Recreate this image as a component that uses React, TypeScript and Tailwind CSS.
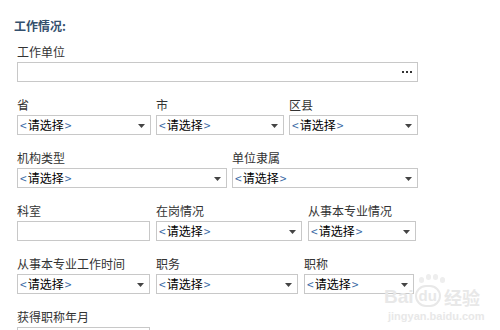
import React from "react";

const font = { fontFamily: '"Noto Sans CJK SC", "Noto Sans", sans-serif' };

function Arrow() {
  return (
    <svg width="7" height="4" viewBox="0 0 7 4" className="absolute right-[5px] top-[8px]">
      <path d="M0 0 H7 L3.5 4 Z" fill="#444" />
    </svg>
  );
}

function Select({ w }: { w: string }) {
  return (
    <div className={`relative h-5 ${w} border border-[#c8c8c8] bg-white flex items-center pl-[2px] text-[12px] leading-[16px] text-black`}>
      <span className="text-[#3a6aa5] mr-[1px]">&lt;</span>
      <span>请选择</span>
      <span className="text-[#3a6aa5] ml-[1px]">&gt;</span>
      <Arrow />
    </div>
  );
}

function Input({ w, dots }: { w: string; dots?: boolean }) {
  return (
    <div className={`relative h-5 ${w} border border-[#c8c8c8] bg-white`}>
      {dots && (
        <div className="absolute right-[5px] top-[8px] flex gap-[2px]">
          <span className="block w-[2px] h-[2px] bg-[#333]" />
          <span className="block w-[2px] h-[2px] bg-[#333]" />
          <span className="block w-[2px] h-[2px] bg-[#333]" />
        </div>
      )}
    </div>
  );
}

function Field({ label, children }: { label: string; children: React.ReactNode }) {
  return (
    <div className="flex flex-col">
      <div className="text-[12px] leading-[16px] h-4 mb-[2px] text-[#333] whitespace-nowrap">{label}</div>
      {children}
    </div>
  );
}

export default function App() {
  return (
    <div className="relative w-[500px] h-[330px] overflow-hidden bg-white" style={font}>
      <div className="pt-[18px] pl-[14px]">
        <div className="text-[12px] leading-[16px] font-bold text-[#34506d]">工作情况:</div>
      </div>
      <div className="pl-[17px] pt-[10px] flex flex-col gap-[15px]">
        <Field label="工作单位">
          <Input w="w-[401px]" dots />
        </Field>
        <div className="flex gap-[5px]">
          <Field label="省"><Select w="w-[134px]" /></Field>
          <Field label="市"><Select w="w-[128px]" /></Field>
          <Field label="区县"><Select w="w-[129px]" /></Field>
        </div>
        <div className="flex gap-[5px]">
          <Field label="机构类型"><Select w="w-[210px]" /></Field>
          <Field label="单位隶属"><Select w="w-[186px]" /></Field>
        </div>
        <div className="flex gap-[6px]">
          <Field label="科室"><Input w="w-[133px]" /></Field>
          <Field label="在岗情况"><Select w="w-[146px]" /></Field>
          <Field label="从事本专业情况"><Select w="w-[108px]" /></Field>
        </div>
        <div className="flex gap-[6px]">
          <Field label="从事本专业工作时间"><Select w="w-[133px]" /></Field>
          <Field label="职务"><Select w="w-[142px]" /></Field>
          <Field label="职称"><Select w="w-[110px]" /></Field>
        </div>
        <div className="flex">
          <Field label="获得职称年月"><Input w="w-[133px]" /></Field>
        </div>
      </div>
      <div className="absolute left-[384px] top-[285px] flex flex-col items-start pointer-events-none" style={{ fontFamily: '"Liberation Sans", "Noto Sans CJK SC", sans-serif' }}>
        <div className="flex items-end text-[#e8e8e8] font-bold">
          <span className="text-[19px] leading-[20px]">Bai</span>
          <span className="relative mx-[1px] text-[15px] leading-[18px] border-2 border-[#e8e8e8] rounded-full px-[2px]">du
            <span className="absolute -top-[10px] left-[2px] w-[5px] h-[6px] rounded-full bg-[#eeeeee]" />
            <span className="absolute -top-[13px] left-[9px] w-[5px] h-[6px] rounded-full bg-[#eeeeee]" />
            <span className="absolute -top-[13px] left-[16px] w-[5px] h-[6px] rounded-full bg-[#eeeeee]" />
            <span className="absolute -top-[10px] left-[23px] w-[5px] h-[6px] rounded-full bg-[#eeeeee]" />
          </span>
          <span className="text-[18px] leading-[20px] ml-[2px]" style={{ fontFamily: '"Noto Sans CJK SC", sans-serif' }}>经验</span>
        </div>
        <div className="text-[11px] leading-[14px] text-[#e8e8e8] font-bold mt-[2px] ml-[4px]">jingyan.baidu.com</div>
      </div>
    </div>
  );
}
